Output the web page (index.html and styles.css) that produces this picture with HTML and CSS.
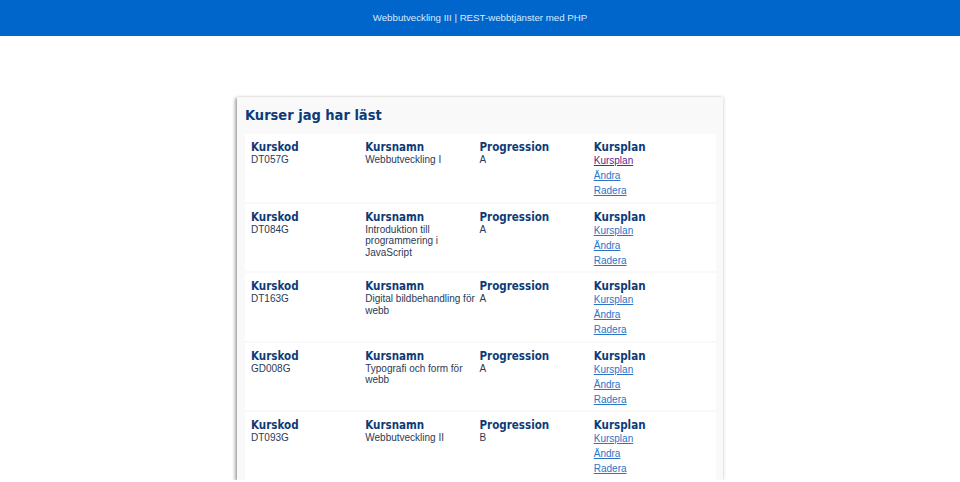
FILE: index.html
```html
<!DOCTYPE html>
<html lang="sv">
<head>
<meta charset="utf-8">
<title>Kurser</title>
<link rel="stylesheet" href="styles.css">
</head>
<body>
<header class="topbar">Webbutveckling III | REST-webbtjänster med PHP</header>
<main class="card">
  <h1 class="title">Kurser jag har läst</h1>
  <div class="list">
    <div class="row">
      <div class="cell"><h2>Kurskod</h2><p>DT057G</p></div>
      <div class="cell"><h2>Kursnamn</h2><p>Webbutveckling I</p></div>
      <div class="cell"><h2>Progression</h2><p>A</p></div>
      <div class="cell"><h2>Kursplan</h2><a class="visited" href="#">Kursplan</a><a href="#">Ändra</a><a href="#">Radera</a></div>
    </div>
    <div class="row">
      <div class="cell"><h2>Kurskod</h2><p>DT084G</p></div>
      <div class="cell"><h2>Kursnamn</h2><p>Introduktion till programmering i JavaScript</p></div>
      <div class="cell"><h2>Progression</h2><p>A</p></div>
      <div class="cell"><h2>Kursplan</h2><a href="#">Kursplan</a><a href="#">Ändra</a><a href="#">Radera</a></div>
    </div>
    <div class="row">
      <div class="cell"><h2>Kurskod</h2><p>DT163G</p></div>
      <div class="cell"><h2>Kursnamn</h2><p>Digital bildbehandling för webb</p></div>
      <div class="cell"><h2>Progression</h2><p>A</p></div>
      <div class="cell"><h2>Kursplan</h2><a href="#">Kursplan</a><a href="#">Ändra</a><a href="#">Radera</a></div>
    </div>
    <div class="row">
      <div class="cell"><h2>Kurskod</h2><p>GD008G</p></div>
      <div class="cell"><h2>Kursnamn</h2><p>Typografi och form för webb</p></div>
      <div class="cell"><h2>Progression</h2><p>A</p></div>
      <div class="cell"><h2>Kursplan</h2><a href="#">Kursplan</a><a href="#">Ändra</a><a href="#">Radera</a></div>
    </div>
    <div class="row">
      <div class="cell"><h2>Kurskod</h2><p>DT093G</p></div>
      <div class="cell"><h2>Kursnamn</h2><p>Webbutveckling II</p></div>
      <div class="cell"><h2>Progression</h2><p>B</p></div>
      <div class="cell"><h2>Kursplan</h2><a href="#">Kursplan</a><a href="#">Ändra</a><a href="#">Radera</a></div>
    </div>
  </div>
</main>
</body>
</html>
```
FILE: styles.css
```css
* { box-sizing: border-box; }
html, body { margin: 0; padding: 0; background: #fff; }
body { font-family: "Liberation Sans", Arial, sans-serif; }

.topbar {
  height: 36px;
  background: #0066cc;
  color: #dbe9ff;
  font-size: 9.7px;
  line-height: 36px;
  text-align: center;
}

.card {
  width: 486px;
  margin: 61px auto 0;
  background: #f9f9f9;
  padding: 6px 7px 0 8px;
  box-shadow: -2px 1px 3px rgba(0,0,0,0.35), 1px 0 3px rgba(0,0,0,0.12);
}

.title {
  margin: 0;
  padding: 2px 0 0 0;
  font-family: "DejaVu Sans Condensed", "DejaVu Sans", Tahoma, sans-serif;
  font-size: 14.5px;
  font-weight: bold;
  color: #0d3b78;
  height: 31px;
  line-height: 20px;
}

.list {
  display: flex;
  flex-direction: column;
  gap: 2px;
}

.row {
  background: #fff;
  display: grid;
  grid-template-columns: repeat(4, 1fr);
  padding: 7px 8px 3px 6px;
  height: 67.6px;
}

.cell h2 {
  margin: 0;
  font-family: "DejaVu Sans Condensed", "DejaVu Sans", Tahoma, sans-serif;
  font-size: 11.5px;
  font-weight: bold;
  color: #0d3b78;
  line-height: 13px;
}

.cell p {
  margin: 0;
  font-size: 10px;
  line-height: 11.5px;
  color: #2b3a55;
  padding-right: 1px;
}

.cell a {
  display: block;
  width: max-content;
  font-size: 10px;
  line-height: 15px;
  margin-top: -1px;
  color: #2b74c8;
  text-decoration: underline;
}
.cell a + a { margin-top: 0; }
.cell a.visited { color: #5b2a8e; }
```
